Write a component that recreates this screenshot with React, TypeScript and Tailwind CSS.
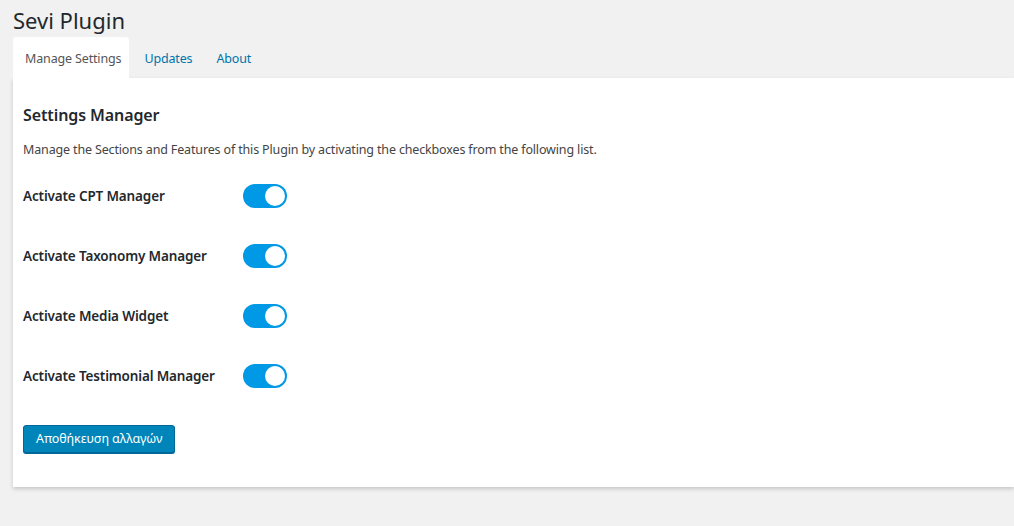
import React, { useState } from 'react';

const features = [
  'Activate CPT Manager',
  'Activate Taxonomy Manager',
  'Activate Media Widget',
  'Activate Testimonial Manager',
];

const Toggle: React.FC<{ on: boolean; onChange: () => void }> = ({ on, onChange }) => (
  <button
    onClick={onChange}
    className={`relative w-[44px] h-[24px] rounded-full ${on ? 'bg-[#0099e5]' : 'bg-[#ccc]'}`}
  >
    <span
      className={`absolute top-[2px] w-[20px] h-[20px] rounded-full bg-white ${on ? 'left-[22px]' : 'left-[2px]'}`}
    />
  </button>
);

export default function App() {
  const [active, setActive] = useState([true, true, true, true]);

  const flip = (i: number) => {
    setActive(prev => prev.map((v, j) => (j === i ? !v : v)));
  };

  return (
    <div className="min-h-[526px] bg-[#f1f1f1] pl-[13px] pt-[6px] font-['Noto_Sans',sans-serif] text-[#23282d]">
      <h1 className="text-[22px] leading-[29px] font-normal">Sevi Plugin</h1>

      {/* Tabs */}
      <div className="flex mt-[2px] text-[12.5px] tracking-[-0.15px]">
        <div className="h-[41px] flex items-center pt-[3px] pl-[12px] pr-[8px] bg-white rounded-t-[3px] text-[#555]">Manage Settings</div>
        <div className="h-[41px] flex items-center ml-[15px] pt-[3px] text-[#0073aa]">Updates</div>
        <div className="h-[41px] flex items-center ml-[24px] pt-[3px] text-[#0073aa]">About</div>
      </div>

      {/* Panel */}
      <div className="bg-white shadow-[0_2px_4px_rgba(0,0,0,0.18)] px-[10px] pt-[26px] pb-[34px]">
        <h2 className="text-[16px] leading-[22px] font-semibold tracking-[-0.1px]">Settings Manager</h2>
        <p className="text-[12.5px] leading-[18px] mt-[15px] text-[#444] tracking-[-0.15px]">
          Manage the Sections and Features of this Plugin by activating the checkboxes from the following list.
        </p>

        <div className="mt-[25px] flex flex-col gap-[36px]">
          {features.map((f, i) => (
            <div key={f} className="flex items-center">
              <span className="w-[220px] text-[13.5px] font-semibold tracking-[-0.15px]">{f}</span>
              <Toggle on={active[i]} onChange={() => flip(i)} />
            </div>
          ))}
        </div>

        <button className="mt-[37px] h-[28px] px-[12px] text-[12.5px] tracking-[-0.1px] text-white bg-[#0085ba] border border-[#006799] rounded-[3px] shadow-[0_1px_0_#006799]">
          Αποθήκευση αλλαγών
        </button>
      </div>
    </div>
  );
}
